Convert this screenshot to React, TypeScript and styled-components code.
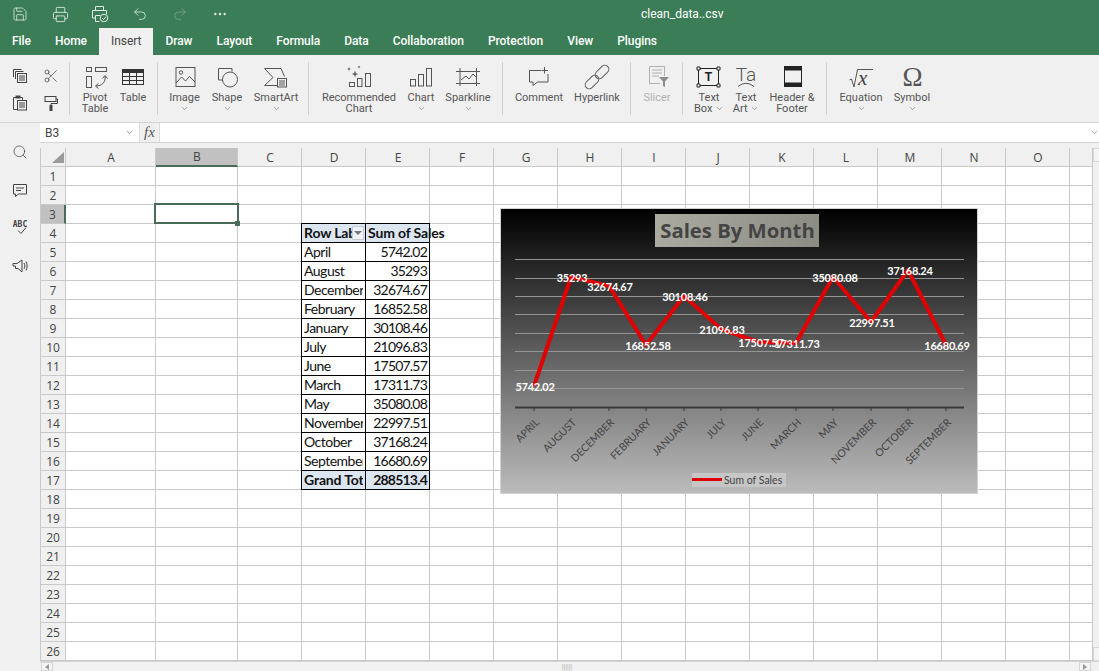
import React from "react";
import styled, { createGlobalStyle } from "styled-components";
import { ChevronDown, Ellipsis, Printer, Redo2, Save, Scissors, Search, Undo2 } from "lucide-react";

const GREEN = "#3b7d56";
const PANEL = "#f0f0f0";
const GRID = "#c9c9c9";
const INK = "#444";
const SELECT = "#4a6b58";

const GlobalStyle = createGlobalStyle`
  html, body {
    margin: 0;
    height: 100%;
    overflow: hidden;
    background: #fff;
    font-family: Roboto, "Liberation Sans", sans-serif;
  }
  * { box-sizing: border-box; }
`;

const Page = styled.div`
  width: 1099px;
  height: 671px;
  display: flex;
  flex-direction: column;
  overflow: hidden;
`;

const Header = styled.header`
  height: 55px;
  background: ${GREEN};
  color: #fff;
`;
const QuickBar = styled.div`
  height: 28px;
  display: flex;
  align-items: center;
`;
const QuickButton = styled.span<{ $off?: boolean }>`
  width: 40px;
  display: flex;
  justify-content: center;
  color: ${(p) => (p.$off ? "#7fa891" : "#e3ece6")};
`;
const DocTitle = styled.div`
  margin-left: 401px;
  font-size: 12px;
  color: #fff;
`;
const Tabs = styled.nav`
  height: 27px;
  display: flex;
`;
const Tab = styled.div<{ $active?: boolean }>`
  padding: 0 12px;
  line-height: 26px;
  font-size: 12px;
  letter-spacing: -0.05px;
  font-weight: ${(p) => (p.$active ? 400 : 500)};
  color: ${(p) => (p.$active ? INK : "#fff")};
  background: ${(p) => (p.$active ? PANEL : "transparent")};
`;

const Ribbon = styled.div`
  height: 68px;
  padding-top: 7px;
  display: flex;
  align-items: flex-start;
  background: ${PANEL};
  border-bottom: 1px solid #d4d4d4;
`;
const Group = styled.div<{ $last?: boolean }>`
  height: 53px;
  padding: 0 5px 0 6px;
  display: flex;
  border-right: ${(p) => (p.$last ? "none" : "1px solid #d2d2d2")};
`;
const ClipGrid = styled.div`
  width: 70px;
  height: 53px;
  padding-left: 4px;
  display: grid;
  grid-template-columns: 31px 31px;
  grid-auto-rows: 27px;
  place-items: center;
  border-right: 1px solid #d2d2d2;
  color: ${INK};
`;
const Item = styled.div<{ $w: number; $off?: boolean }>`
  width: ${(p) => p.$w}px;
  display: flex;
  flex-direction: column;
  align-items: center;
  color: ${(p) => (p.$off ? "#b0b0b0" : "#555")};
`;
const Label = styled.div`
  margin-top: 1px;
  font-size: 11px;
  line-height: 11px;
  text-align: center;
  white-space: nowrap;
`;
const Caret = styled.span`
  display: inline-flex;
  height: 11px;
  align-items: center;
  vertical-align: top;
`;
const Art = styled.svg`
  display: block;
  flex: none;
  fill: none;
  stroke: currentColor;
  stroke-width: 1;
`;

// ribbon pictures are drawn in page coordinates, the viewBox cuts out the slot above the label
const Ic = ({ cx, children }: { cx: number; children: React.ReactNode }) => (
  <Art width={28} height={29} viewBox={`${cx - 14} 62 28 29`}>
    {children}
  </Art>
);

const star = (x: number, y: number, r: number) =>
  `M${x} ${y - r}L${x + r * 0.25} ${y - r * 0.25}L${x + r} ${y}L${x + r * 0.25} ${y + r * 0.25}L${x} ${y + r}L${x - r * 0.25} ${y + r * 0.25}L${x - r} ${y}L${x - r * 0.25} ${y - r * 0.25}Z`;

const Small = { fill: "currentColor", stroke: "none" };

const Body = styled.div`
  flex: 1;
  min-height: 0;
  display: flex;
`;
const Sidebar = styled.aside`
  width: 40px;
  padding-top: 10px;
  background: ${PANEL};
  color: #444;
`;
const SideSlot = styled.div`
  height: 38px;
  display: flex;
  align-items: center;
  justify-content: center;
`;
const Main = styled.div`
  flex: 1;
  min-width: 0;
  display: flex;
  flex-direction: column;
  background: ${PANEL};
`;
const FormulaBar = styled.div`
  height: 20px;
  display: flex;
  background: #fff;
  border-bottom: 1px solid #d4d4d4;
`;
const NameBox = styled.div`
  width: 99px;
  padding: 0 5px;
  display: flex;
  align-items: center;
  justify-content: space-between;
  font-size: 12px;
  color: #444;
`;
const FxBox = styled.div`
  width: 21px;
  display: flex;
  align-items: center;
  justify-content: center;
  background: ${PANEL};
  border-left: 1px solid #ddd;
  border-right: 1px solid #ddd;
  font: italic 15px "Liberation Serif", serif;
  color: #555;
`;
const FormulaInput = styled.div`
  flex: 1;
  display: flex;
  align-items: center;
  justify-content: flex-end;
  color: #555;
`;

const Workspace = styled.div`
  margin-top: 5px;
  flex: 1;
  min-height: 0;
  display: flex;
`;
const Sheet = styled.div`
  position: relative;
  width: 1053px;
  height: 513px;
  border-left: 1px solid ${GRID};
  display: grid;
  grid-template-columns: 25px 90px 82px 64px repeat(12, 64px) 23px;
  grid-template-rows: 19px repeat(26, 19px);
  background: #fff;
  font: 14px Lato, sans-serif;
  color: #111;
`;
const Corner = styled.div`
  position: relative;
  background: ${PANEL};
  border-right: 1px solid ${GRID};
  border-bottom: 1px solid ${GRID};
  &::after {
    content: "";
    position: absolute;
    right: 1px;
    bottom: 3px;
    width: 12px;
    height: 11px;
    background: #9a9a9a;
    clip-path: polygon(100% 0, 100% 100%, 0 100%);
  }
`;
const ColHead = styled.div<{ $on?: boolean }>`
  display: flex;
  align-items: center;
  justify-content: center;
  padding-left: 1px;
  font: 12px "Open Sans", sans-serif;
  color: ${INK};
  background: ${(p) => (p.$on ? "#c1c1c1" : PANEL)};
  border-right: 1px solid ${GRID};
  border-bottom: ${(p) => (p.$on ? `2px solid ${SELECT}` : `1px solid ${GRID}`)};
`;
const RowHead = styled.div<{ $on?: boolean }>`
  display: flex;
  align-items: center;
  justify-content: center;
  font: 12px "Open Sans", sans-serif;
  color: ${INK};
  background: ${(p) => (p.$on ? "#c1c1c1" : PANEL)};
  border-right: ${(p) => (p.$on ? `2px solid ${SELECT}` : `1px solid ${GRID}`)};
  border-bottom: 1px solid ${GRID};
`;
const Cell = styled.div`
  border-right: 1px solid ${GRID};
  border-bottom: 1px solid ${GRID};
`;
const PivotCell = styled.div<{ $strong?: boolean; $right?: boolean; $spill?: boolean }>`
  margin: -1px 0 0 -1px;
  padding: 0 2px 2px;
  display: flex;
  align-items: center;
  justify-content: ${(p) => (p.$right ? "flex-end" : "flex-start")};
  border: 1px solid #000;
  white-space: nowrap;
  letter-spacing: ${(p) => (p.$right ? "-0.8px" : p.$strong ? "-0.15px" : "-0.5px")};
  overflow: ${(p) => (p.$spill ? "visible" : "hidden")};
  font-weight: ${(p) => (p.$strong ? 700 : 400)};
  background: ${(p) => (p.$strong ? "#dce6f1" : "#fff")};
`;
const PivotText = styled.span`
  flex: 1;
  min-width: 0;
  overflow: hidden;
`;
const FilterButton = styled.span`
  flex: none;
  width: 12px;
  height: 14px;
  margin: 2px -1px 0 0;
  display: flex;
  align-items: center;
  justify-content: center;
  background: #eef1f5;
  border: 1px solid #c6ccd4;
  &::before {
    content: "";
    border-left: 4px solid transparent;
    border-right: 4px solid transparent;
    border-top: 4px solid #777;
  }
`;
const Selection = styled.div`
  position: absolute;
  left: 113px;
  top: 55px;
  width: 85px;
  height: 21px;
  border: 2px solid ${SELECT};
  &::after {
    content: "";
    position: absolute;
    right: -3px;
    bottom: -4px;
    width: 5px;
    height: 5px;
    background: ${SELECT};
  }
`;
const ChartFrame = styled.svg`
  position: absolute;
  left: 459px;
  top: 60px;
  display: block;
`;
const VScroll = styled.div`
  width: 6px;
  height: 513px;
  display: flex;
  flex-direction: column;
  justify-content: space-between;
  background: ${PANEL};
`;
const ScrollButton = styled.div`
  height: 14px;
  background: #f4f4f4;
  border: 1px solid #d6d6d6;
  border-right: none;
`;
const HScroll = styled.div`
  height: 10px;
  padding-left: 1px;
  display: flex;
  align-items: stretch;
  border-top: 1px solid #d4d4d4;
  background: ${PANEL};
`;
const HButton = styled.div<{ $dir: "left" | "right" }>`
  width: 12px;
  display: flex;
  align-items: center;
  justify-content: center;
  background: #f4f4f4;
  border: 1px solid #d6d6d6;
  &::before {
    content: "";
    border-top: 3px solid transparent;
    border-bottom: 3px solid transparent;
    ${(p) => (p.$dir === "left" ? "border-right: 4px solid #999;" : "border-left: 4px solid #999;")}
  }
`;
const HThumb = styled.div`
  width: 1024px;
  margin: 0 0 0 2px;
  display: flex;
  align-items: center;
  justify-content: center;
  font-size: 7px;
  letter-spacing: 0;
  color: #aaa;
  background: #f2f2f2;
`;

const tabs = ["File", "Home", "Insert", "Draw", "Layout", "Formula", "Data", "Collaboration", "Protection", "View", "Plugins"];
const columns = ["A", "B", "C", "D", "E", "F", "G", "H", "I", "J", "K", "L", "M", "N", "O", ""];
const sales: [string, string][] = [
  ["April", "5742.02"],
  ["August", "35293"],
  ["December", "32674.67"],
  ["February", "16852.58"],
  ["January", "30108.46"],
  ["July", "21096.83"],
  ["June", "17507.57"],
  ["March", "17311.73"],
  ["May", "35080.08"],
  ["November", "22997.51"],
  ["October", "37168.24"],
  ["September", "16680.69"],
];

// x, y of the point, x, y of its label
const points = [
  { name: "APRIL", label: "5742.02", x: 534, y: 386, lx: 535, ly: 391 },
  { name: "AUGUST", label: "35293", x: 571, y: 277, lx: 572, ly: 282 },
  { name: "DECEMBER", label: "32674.67", x: 609, y: 286, lx: 610, ly: 291 },
  { name: "FEBRUARY", label: "16852.58", x: 646, y: 345, lx: 648, ly: 350 },
  { name: "JANUARY", label: "30108.46", x: 684, y: 296, lx: 685, ly: 301 },
  { name: "JULY", label: "21096.83", x: 721, y: 329, lx: 722, ly: 334 },
  { name: "JUNE", label: "17507.57", x: 758, y: 342, lx: 761, ly: 347 },
  { name: "MARCH", label: "17311.73", x: 796, y: 343, lx: 797, ly: 348 },
  { name: "MAY", label: "35080.08", x: 833, y: 277, lx: 835, ly: 282 },
  { name: "NOVEMBER", label: "22997.51", x: 871, y: 322, lx: 872, ly: 327 },
  { name: "OCTOBER", label: "37168.24", x: 908, y: 270, lx: 910, ly: 275 },
  { name: "SEPTEMBER", label: "16680.69", x: 946, y: 345, lx: 947, ly: 350 },
];
const gridLines = [259, 278, 296, 314, 333, 351, 370, 388];

const SalesChart = () => (
  <ChartFrame width={478} height={286} viewBox="500 208 478 286">
    <defs>
      <linearGradient id="plate" x1="0" y1="0" x2="0" y2="1">
        <stop offset="0" stopColor="#000" />
        <stop offset="1" stopColor="#bcbcbc" />
      </linearGradient>
      <linearGradient id="titlePlate" x1="0" y1="0" x2="1" y2="0">
        <stop offset="0" stopColor="#aaaaa1" />
        <stop offset="1" stopColor="#8c8c84" />
      </linearGradient>
    </defs>
    <rect x={500.5} y={208.5} width={477} height={285} fill="url(#plate)" stroke="#d2d2d2" />
    <rect x={655} y={214} width={164} height={33} fill="url(#titlePlate)" />
    <text x={737.5} y={238} textAnchor="middle" fontFamily="'Open Sans', sans-serif" fontWeight={700} fontSize={20.3} fill="#444">
      Sales By Month
    </text>
    {gridLines.map((y) => (
      <line key={y} x1={515} x2={964} y1={y + 0.5} y2={y + 0.5} stroke="#959595" />
    ))}
    <line x1={515} x2={964} y1={407.5} y2={407.5} stroke="#3a3a3a" strokeWidth={2} />
    {points.map((p) => (
      <line key={p.name} x1={p.x} x2={p.x} y1={408} y2={411} stroke="#3a3a3a" />
    ))}
    <polyline
      points={points.map((p) => `${p.x},${p.y}`).join(" ")}
      fill="none"
      stroke="#e00000"
      strokeWidth={4}
      strokeLinejoin="round"
    />
    {points.map((p) => (
      <text key={p.label} x={p.lx} y={p.ly} textAnchor="middle" fontFamily="Lato, sans-serif" fontSize={11} fontWeight={700} letterSpacing={-0.25} fill="#fff">
        {p.label}
      </text>
    ))}
    {points.map((p) => (
      <text
        key={p.name}
        x={p.x + 6}
        y={423}
        textAnchor="end"
        transform={`rotate(-45 ${p.x + 6} 423)`}
        fontFamily="Lato, sans-serif"
        fontSize={10.5}
        fill="#444"
      >
        {p.name}
      </text>
    ))}
    <rect x={692} y={473} width={94} height={14} fill="#c6c6c6" />
    <line x1={692} x2={722} y1={479.5} y2={479.5} stroke="#e00000" strokeWidth={3} />
    <text x={724} y={484} fontFamily="Lato, sans-serif" fontSize={10.5} fill="#444">
      Sum of Sales
    </text>
  </ChartFrame>
);

const renderCell = (row: number, col: number) => {
  const key = `${row}-${col}`;
  if (row >= 4 && row <= 17 && (col === 3 || col === 4)) {
    const isHead = row === 4;
    const isTotal = row === 17;
    if (col === 3) {
      return (
        <PivotCell key={key} $strong={isHead || isTotal}>
          <PivotText>{isHead ? "Row Labels" : isTotal ? "Grand Total" : sales[row - 5][0]}</PivotText>
          {isHead && <FilterButton />}
        </PivotCell>
      );
    }
    if (isHead) {
      return (
        <PivotCell key={key} $strong $spill>
          Sum of Sales
        </PivotCell>
      );
    }
    return (
      <PivotCell key={key} $strong={isTotal} $right>
        {isTotal ? "288513.4" : sales[row - 5][1]}
      </PivotCell>
    );
  }
  return <Cell key={key} />;
};

const Chev = () => (
  <Caret>
    <ChevronDown size={9} strokeWidth={1.4} />
  </Caret>
);

const App = () => (
  <Page>
    <GlobalStyle />
    <Header>
      <QuickBar>
        <QuickButton>
          <Save size={16} strokeWidth={1.2} />
        </QuickButton>
        <QuickButton>
          <Printer size={17} strokeWidth={1.2} />
        </QuickButton>
        <QuickButton>
          <Art width={18} height={18} viewBox="0 0 18 18">
            <path d="M4.5 5V1.5h8V5M4 13H1.5V5.5h14V9M4.5 10.5h5M4.5 10.5v6h4" />
            <circle cx={13} cy={13} r={3.8} />
            <path d="M11 13l1.5 1.5 2.5-2.8" />
          </Art>
        </QuickButton>
        <QuickButton>
          <Undo2 size={16} strokeWidth={1.2} />
        </QuickButton>
        <QuickButton $off>
          <Redo2 size={16} strokeWidth={1.2} />
        </QuickButton>
        <QuickButton>
          <Ellipsis size={16} strokeWidth={1.6} />
        </QuickButton>
        <DocTitle>clean_data..csv</DocTitle>
      </QuickBar>
      <Tabs>
        {tabs.map((t) => (
          <Tab key={t} $active={t === "Insert"}>
            {t}
          </Tab>
        ))}
      </Tabs>
    </Header>

    <Ribbon>
      <ClipGrid>
        <Art width={16} height={16} viewBox="0 0 16 16">
          <path d="M1.5 9V1.5h8M3.5 11V3.5h8" />
          <rect x={5.5} y={5.5} width={9} height={9} />
          <path d="M7 8h6M7 10h6M7 12h6" />
        </Art>
        <Scissors size={16} strokeWidth={1.1} />
        <Art width={16} height={16} viewBox="0 0 16 16">
          <path d="M5 14.5H1.5V2.5h9v3" />
          <rect x={3.5} y={0.5} width={5} height={3} {...Small} />
          <rect x={5.5} y={5.5} width={9} height={9.5} />
          <path d="M7 8h6M7 10h6M7 12h6" />
        </Art>
        <Art width={14} height={16} viewBox="0 0 14 16">
          <rect x={1} y={1.5} width={11} height={5} />
          <path d="M12 4h1.5v4.5H7V11" />
          <rect x={5.5} y={10} width={3} height={6} {...Small} />
        </Art>
      </ClipGrid>

      <Group>
        <Item $w={38}>
          <Ic cx={95}>
            <rect x={86.5} y={67.5} width={5} height={4} />
            <rect x={95.5} y={67.5} width={11} height={4} />
            <rect x={86.5} y={76.5} width={5} height={11} />
            <path d="M105 76c1 6-3 10-9 10M102.5 78.5l2.5-3 2.5 3M98.5 83.5l-3 2.5 3 2.5" />
          </Ic>
          <Label>
            Pivot
            <br />
            Table
          </Label>
        </Item>
        <Item $w={38}>
          <Ic cx={133}>
            <rect x={122.5} y={69.5} width={21} height={15} stroke="#333" />
            <rect x={122} y={69} width={22} height={4} fill="#333" stroke="none" />
            <path d="M129.5 73v11M136.5 73v11M122.5 76.5h21M122.5 80.5h21" stroke="#333" />
          </Ic>
          <Label>Table</Label>
        </Item>
      </Group>

      <Group>
        <Item $w={41}>
          <Ic cx={184.5}>
            <rect x={175.5} y={67.5} width={19} height={19} />
            <circle cx={180.5} cy={72.5} r={1.7} />
            <path d="M175.5 83l5.5-6 4 4 4-4.5 5.5 5.5" />
          </Ic>
          <Label>Image</Label>
          <Chev />
        </Item>
        <Item $w={44}>
          <Ic cx={227}>
            <path d="M232 71.5V68.5H218.5V80H223" />
            <circle cx={230} cy={79.5} r={7.5} />
          </Ic>
          <Label>Shape</Label>
          <Chev />
        </Item>
        <Item $w={54}>
          <Ic cx={276}>
            <path d="M277 85.5H264.5l8.5-8-8.5-9H281l3.5 8" />
            <rect x={277.5} y={78.5} width={9} height={8.5} />
            <path d="M279 81h6M279 83h6M279 85h6" />
          </Ic>
          <Label>SmartArt</Label>
          <Chev />
        </Item>
      </Group>

      <Group>
        <Item $w={88}>
          <Ic cx={359}>
            <path d={star(349, 69, 2)} {...Small} />
            <path d={star(359, 67, 1.6)} {...Small} />
            <path d={star(355, 74, 3.4)} {...Small} />
            <rect x={349.5} y={82.5} width={5} height={4} />
            <rect x={357.5} y={78.5} width={4.5} height={8} />
            <rect x={365.5} y={73.5} width={5} height={13} />
          </Ic>
          <Label>
            Recommended
            <br />
            Chart
          </Label>
        </Item>
        <Item $w={36}>
          <Ic cx={421}>
            <rect x={410.5} y={79.5} width={5} height={6.5} />
            <rect x={418.5} y={74.5} width={5} height={11.5} />
            <rect x={426.5} y={68.5} width={5} height={17.5} />
          </Ic>
          <Label>Chart</Label>
          <Chev />
        </Item>
        <Item $w={58}>
          <Ic cx={468}>
            <path d="M456 71.5h24M456 83.5h24M460 68v18M476.5 68v18M461 80l5-4 3 3 4-5 3 3" />
          </Ic>
          <Label>Sparkline</Label>
          <Chev />
        </Item>
      </Group>

      <Group>
        <Item $w={60}>
          <Ic cx={539}>
            <path d="M541 70.5H529.5V82H533v3.5l4.5-3.5H548V74M544.5 67v6.5M541.5 70.5h6.5" />
          </Ic>
          <Label>Comment</Label>
        </Item>
        <Item $w={56}>
          <Ic cx={597}>
            <rect x={594} y={68} width={16} height={8} rx={4} transform="rotate(-45 602 72)" />
            <rect x={584} y={78} width={16} height={8} rx={4} transform="rotate(-45 592 82)" />
          </Ic>
          <Label>Hyperlink</Label>
        </Item>
      </Group>

      <Group>
        <Item $w={40} $off>
          <Ic cx={657}>
            <path d="M660 83.5H649.5V66.5H664.5V76M652 70h10M652 73h10M652 76h7" />
            <path d="M659 77h10l-4 4.5V87l-2-1v-4.5z" fill="#8c8c8c" stroke="none" />
          </Ic>
          <Label>Slicer</Label>
        </Item>
      </Group>

      <Group>
        <Item $w={40}>
          <Ic cx={709}>
            <rect x={698.5} y={68.5} width={20} height={17} stroke="#222" />
            <path d="M697 67h3v3h-3zM717 67h3v3h-3zM697 84h3v3h-3zM717 84h3v3h-3z" fill="#fff" stroke="#222" />
            <text x={708.5} y={81} textAnchor="middle" fontFamily="'Liberation Sans', sans-serif" fontWeight={700} fontSize={12} fill="#222" stroke="none">
              T
            </text>
          </Ic>
          <Label>
            Text
            <br />
            Box <Chev />
          </Label>
        </Item>
        <Item $w={34}>
          <Ic cx={746}>
            <text x={746} y={81} textAnchor="middle" fontFamily="Roboto, sans-serif" fontWeight={300} fontSize={19} fill="#555" stroke="none">
              Ta
            </text>
            <path d="M738 86.5Q746 80 754 86.5" />
          </Ic>
          <Label>
            Text
            <br />
            Art <Chev />
          </Label>
        </Item>
        <Item $w={58}>
          <Ic cx={792}>
            <rect x={784.5} y={66.5} width={17} height={20} stroke="#222" />
            <rect x={785} y={67} width={16} height={3.5} fill="#222" stroke="none" />
            <rect x={785} y={82.5} width={16} height={3.5} fill="#222" stroke="none" />
          </Ic>
          <Label>
            Header &amp;
            <br />
            Footer
          </Label>
        </Item>
      </Group>

      <Group $last>
        <Item $w={56}>
          <Ic cx={861}>
            <path d="M849.5 80l2-1 2.5 8 3.5-17.5H873" />
            <text x={858} y={85} fontFamily="'Liberation Serif', serif" fontStyle="italic" fontSize={21} fill="#444" stroke="none">
              x
            </text>
          </Ic>
          <Label>Equation</Label>
          <Chev />
        </Item>
        <Item $w={46}>
          <Ic cx={912}>
            <text x={912.5} y={86} textAnchor="middle" fontFamily="'Liberation Serif', serif" fontSize={27} fill="#555" stroke="none">
              Ω
            </text>
          </Ic>
          <Label>Symbol</Label>
          <Chev />
        </Item>
      </Group>
    </Ribbon>

    <Body>
      <Sidebar>
        <SideSlot>
          <Search size={16} strokeWidth={1.1} />
        </SideSlot>
        <SideSlot>
          <Art width={16} height={16} viewBox="0 0 16 16">
            <path d="M1.5 2.5h13v9.5H6.5l-3 2.5V12h-2zM4 6h8M4 8.5h5" />
          </Art>
        </SideSlot>
        <SideSlot>
          <Art width={16} height={16} viewBox="0 0 16 16">
            <text x={8} y={7} textAnchor="middle" fontFamily="'DejaVu Sans Mono', monospace" fontWeight={700} fontSize={8} fill="#444" stroke="none">
              ABC
            </text>
            <path d="M6 10.5l3 3 5-6" />
          </Art>
        </SideSlot>
        <SideSlot>
          <Art width={16} height={16} viewBox="0 0 16 16">
            <path d="M1 5.5h4L10 2v12L6 10.5H3.5V8H1zM12 5c1 2 1 4 0 6M14 3.5c1.5 3 1.5 6 0 9" />
          </Art>
        </SideSlot>
      </Sidebar>
      <Main>
        <FormulaBar>
          <NameBox>
            B3
            <ChevronDown size={9} strokeWidth={1.4} />
          </NameBox>
          <FxBox>fx</FxBox>
          <FormulaInput>
            <ChevronDown size={9} strokeWidth={1.4} />
          </FormulaInput>
        </FormulaBar>
        <Workspace>
          <Sheet>
            <Corner />
            {columns.map((c, i) => (
              <ColHead key={i} $on={c === "B"}>
                {c}
              </ColHead>
            ))}
            {Array.from({ length: 26 }, (_, r) => (
              <React.Fragment key={r}>
                <RowHead $on={r === 2}>{r + 1}</RowHead>
                {columns.map((_c, i) => renderCell(r + 1, i))}
              </React.Fragment>
            ))}
            <Selection />
            <SalesChart />
          </Sheet>
          <VScroll>
            <ScrollButton />
            <ScrollButton />
          </VScroll>
        </Workspace>
        <HScroll>
          <HButton $dir="left" />
          <HThumb>||||||</HThumb>
          <HButton $dir="right" />
        </HScroll>
      </Main>
    </Body>
  </Page>
);

export default App;
